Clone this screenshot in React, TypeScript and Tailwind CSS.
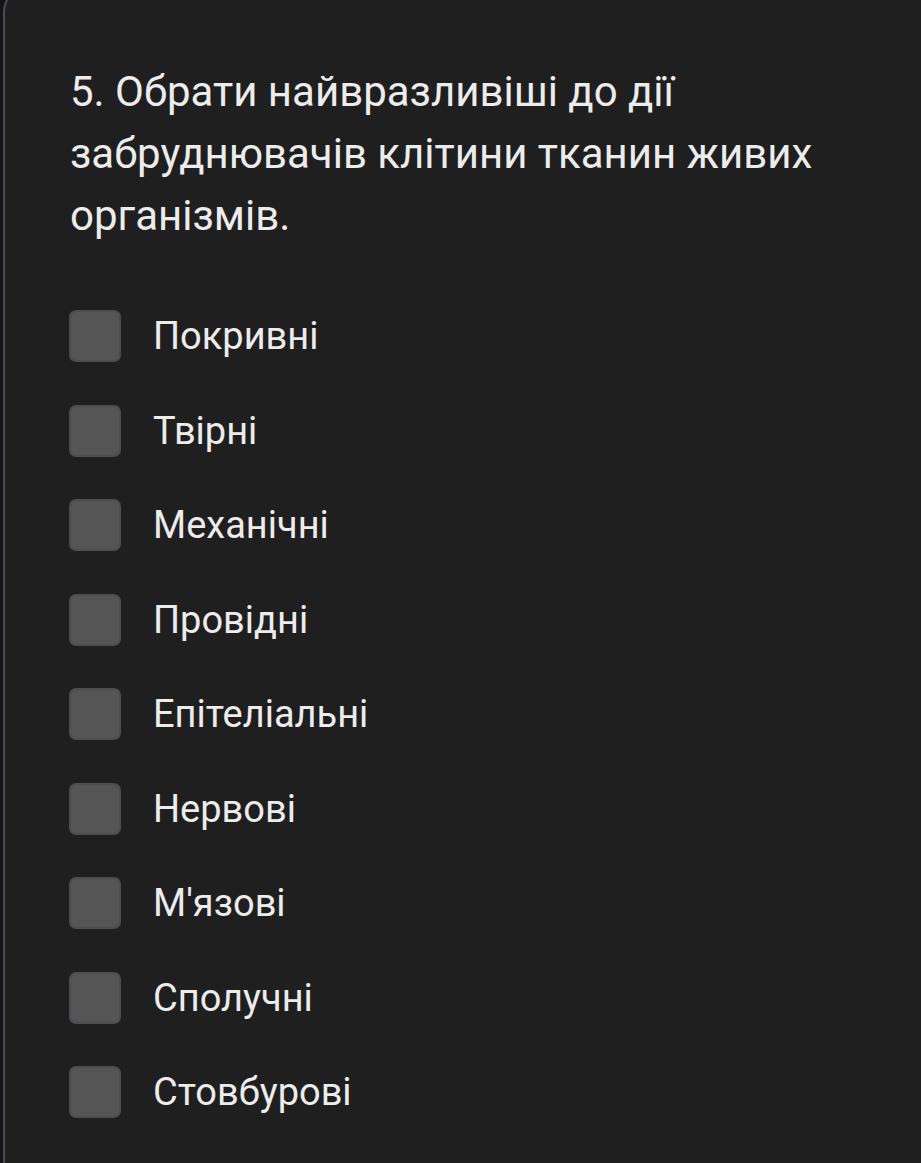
const options = [
  "Покривні",
  "Твірні",
  "Механічні",
  "Провідні",
  "Епітеліальні",
  "Нервові",
  "М'язові",
  "Сполучні",
  "Стовбурові",
];

export default function App() {
  return (
    <div className="h-[1163px] w-[921px] overflow-hidden bg-[#141414] font-['Roboto',sans-serif]">
      <div className="ml-[3px] -mt-[14px] h-[1200px] w-[960px] rounded-tl-[26px] border-l-2 border-t-2 border-[#4b4b55] bg-[#1f1f1f] pl-[64px] pt-[73px]">
        <h1 className="ml-[1px] w-[800px] text-[42px] leading-[62px] text-[#ececec]">
          5. Обрати найвразливіші до дії забруднювачів клітини тканин живих
          організмів.
        </h1>

        <ul className="mt-[63px] flex flex-col gap-[42.5px]">
          {options.map((o) => (
            <li key={o} className="flex items-center">
              <span className="h-[52px] w-[52px] shrink-0 rounded-[7px] border-2 border-[#4a4d51] bg-[#555555]" />
              <span className="ml-[32px] text-[38px] leading-[52px] text-[#ececec]">
                {o}
              </span>
            </li>
          ))}
        </ul>
      </div>
    </div>
  );
}
